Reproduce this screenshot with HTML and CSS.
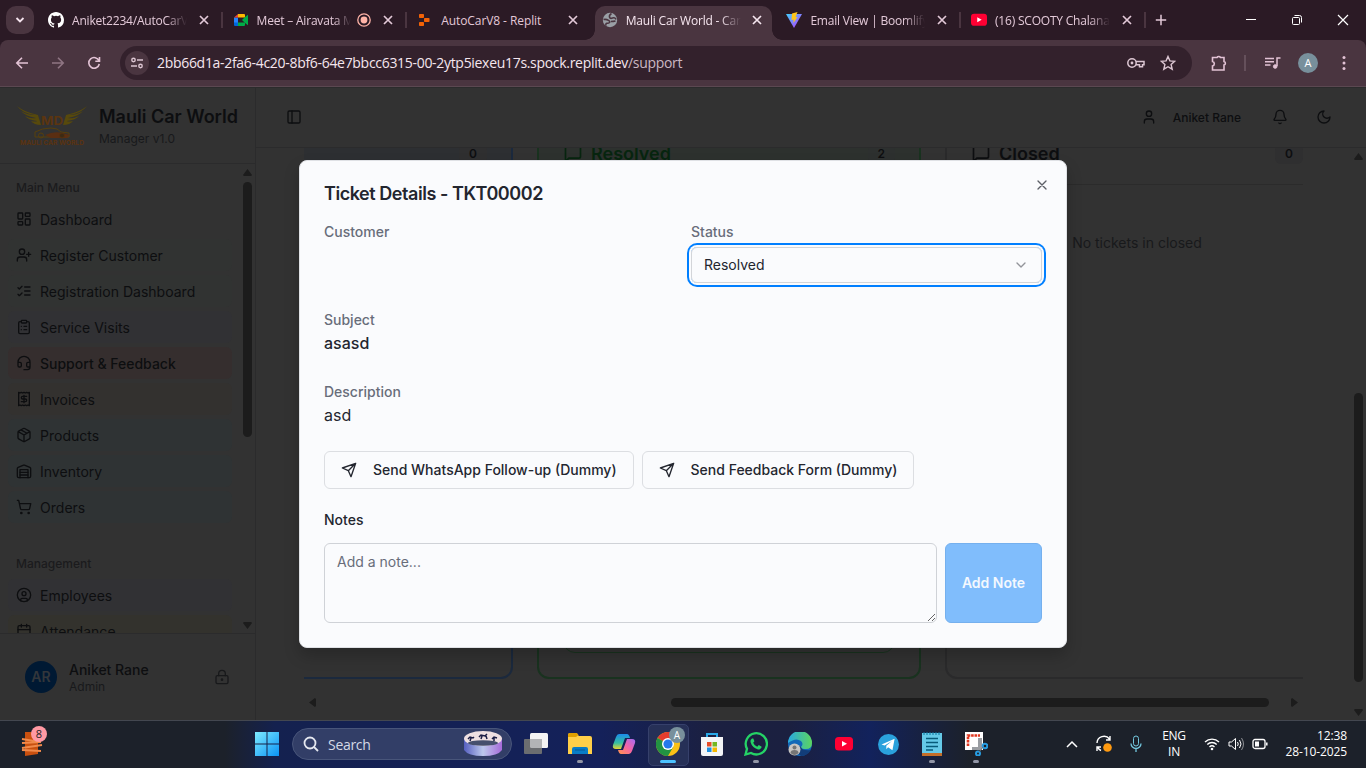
FILE: index.html
```html
<!DOCTYPE html>
<html lang="en">
<head>
<meta charset="utf-8">
<title>Mauli Car World - Car Service</title>
<link rel="stylesheet" href="styles.css">
</head>
<body>
<svg class="defs" aria-hidden="true">
  <symbol id="x" viewBox="0 0 12 12"><path d="M2 2l8 8M10 2l-8 8" fill="none" stroke="currentColor" stroke-width="1.700"/></symbol>
  <symbol id="user" viewBox="0 0 24 24"><path d="M19 21v-2a4 4 0 0 0-4-4H9a4 4 0 0 0-4 4v2"/><circle cx="12" cy="7" r="4"/></symbol>
  <symbol id="send" viewBox="0 0 24 24"><path d="m22 2-7 20-4-9-9-4ZM22 2 11 13"/></symbol>
  <symbol id="msg" viewBox="0 0 24 24"><path d="M21 15a2 2 0 0 1-2 2H7l-4 4V5a2 2 0 0 1 2-2h14a2 2 0 0 1 2 2z"/></symbol>
  <symbol id="yt" viewBox="0 0 20 16"><rect x="1" y="1" width="18" height="13.500" rx="3.500" fill="#ff0033"/><path d="M8 5v5.500l5-2.750z" fill="#fff"/></symbol>
</svg>

<header class="tabs">
  <div class="tab-search"><svg width="12" height="12" viewBox="0 0 12 12" class="ln"><path d="M2.500 4l3.500 3.500L9.500 4" stroke-width="1.800"/></svg></div>
  <div class="tab">
    <svg class="fav" viewBox="0 0 16 16"><path fill="#fff" d="M8 0C3.580 0 0 3.580 0 8c0 3.540 2.290 6.530 5.470 7.590.4.070.55-.17.55-.38v-1.490c-2.010.37-2.530-.49-2.690-.94-.09-.23-.48-.94-.82-1.130-.28-.15-.68-.52-.01-.53.63-.01 1.080.58 1.230.82.72 1.210 1.870.87 2.330.66.07-.52.28-.87.51-1.070-1.780-.2-3.640-.89-3.640-3.950 0-.87.31-1.590.82-2.150-.08-.2-.36-1.020.08-2.120 0 0 .67-.21 2.200.82a7.400 7.400 0 0 1 4 0c1.530-1.040 2.200-.82 2.200-.82.44 1.100.16 1.920.08 2.120.51.56.82 1.270.82 2.150 0 3.070-1.870 3.750-3.650 3.950.29.25.54.73.54 1.480v2.200c0 .21.15.46.55.38A8 8 0 0 0 16 8c0-4.420-3.580-8-8-8z"/></svg>
    <span class="tab-title t1">Aniket2234/AutoCarV</span><svg class="close"><use href="#x"/></svg>
  </div>
  <div class="tab">
    <svg class="fav" viewBox="0 0 16 16"><path d="M1 5.500h4V11H1z" fill="#2684fc"/><path d="M5 2v3.500H1z" fill="#ea4335"/><path d="M5 2h6a1 1 0 0 1 1 1v2.500H5z" fill="#ffba00"/><path d="M5 10.500h7V13a1 1 0 0 1-1 1H5z" fill="#00ac47"/><path d="M1 10.500h4V14H2a1 1 0 0 1-1-1z" fill="#0066da"/><path d="M9 8l3-3 3-2.200v10.400L12 11z" fill="#00ac47"/></svg>
    <span class="tab-title t2">Meet – Airavata M</span>
    <svg class="rec" viewBox="0 0 14 14"><circle cx="7" cy="7" r="6.200" fill="none" stroke="#ffb4a8" stroke-width="1.300"/><circle cx="7" cy="7" r="3.400" fill="#ffb4a8"/></svg>
    <svg class="close"><use href="#x"/></svg>
  </div>
  <div class="tab nosep">
    <svg class="fav" viewBox="0 0 16 16" fill="#f26207"><rect x="2" y="2" width="5" height="4" rx=".8"/><rect x="7" y="6" width="5.500" height="4" rx=".8"/><rect x="2" y="10" width="5" height="4" rx=".8"/></svg>
    <span class="tab-title whole">AutoCarV8 - Replit</span><svg class="close"><use href="#x"/></svg>
  </div>
  <div class="tab active nosep">
    <svg class="fav" viewBox="0 0 16 16"><circle cx="8" cy="8" r="7.200" fill="#9aa0a6"/><path d="M1.500 7.500q3-.5 5 .8t1 2.200-2.500.7-1 2.500M9.500 1.500Q7 3 7.500 5t3 1 3.500 1.500M9 9.500q2.500 0 4.500-.5" stroke="#4a3540" stroke-width="1.600" fill="none"/></svg>
    <span class="tab-title">Mauli Car World - Car</span><svg class="close"><use href="#x"/></svg>
  </div>
  <div class="tab">
    <svg class="fav" viewBox="0 0 16 16"><defs><linearGradient id="v" x1="0" y1="0" x2="1" y2="1"><stop stop-color="#41d1ff"/><stop offset="1" stop-color="#bd34fe"/></linearGradient></defs><path d="M0 2l8 14L16 2z" fill="url(#v)"/><path d="M11.500 0L6 1.500 5.500 8l2-.5L7.500 11l4-6-2 .3z" fill="#ffc61b"/></svg>
    <span class="tab-title">Email View | Boomlify</span><svg class="close"><use href="#x"/></svg>
  </div>
  <div class="tab">
    <svg class="fav" viewBox="1 0 18 16"><use href="#yt" width="20" height="16"/></svg>
    <span class="tab-title">(16) SCOOTY Chalana</span><svg class="close"><use href="#x"/></svg>
  </div>
  <svg class="plus ln" viewBox="0 0 12 12"><path d="M6 .8v10.400M.8 6h10.400" stroke-width="1.500"/></svg>
  <div class="win">
    <svg class="ln" width="12" height="12" viewBox="0 0 12 12"><path d="M1 5.500h10"/></svg>
    <svg class="ln" width="12" height="12" viewBox="0 0 12 12"><rect x="1.500" y="3.500" width="7" height="7" rx="1"/><path d="M3.500 1.500h5a2 2 0 0 1 2 2v5"/></svg>
    <svg class="ln" width="12" height="12" viewBox="0 0 12 12"><path d="M1 1l10 10M11 1L1 11" stroke-width="1.200"/></svg>
  </div>
</header>

<div class="toolbar">
  <div class="navs">
    <svg class="ln" width="14" height="14" viewBox="0 0 14 14"><path d="M13 7H2M7 1.800L1.800 7 7 12.200" stroke-width="1.600"/></svg>
    <svg class="ln dim" width="14" height="14" viewBox="0 0 14 14"><path d="M1 7h11M7 1.800L12.200 7 7 12.200" stroke-width="1.600"/></svg>
    <svg class="ln" width="14" height="14" viewBox="0 0 14 14"><path d="M12 4.800A5.300 5.300 0 1 0 12.300 8M12.500 1v4.200H8.300" stroke-width="1.600"/></svg>
  </div>
  <div class="omnibox">
    <span class="site"><svg class="ln" width="14" height="14" viewBox="0 0 14 14"><circle cx="3.500" cy="4" r="1.700"/><path d="M7 4h6M1 10h6" /><circle cx="10.500" cy="10" r="1.700"/></svg></span>
    <span class="url">2bb66d1a-2fa6-4c20-8bf6-64e7bbcc6315-00-2ytp5iexeu17s.spock.replit.dev<i>/support</i></span>
    <svg class="ln key" width="18" height="12" viewBox="0 0 18 12"><circle cx="5" cy="6" r="4.200" stroke-width="1.500"/><circle cx="5" cy="6" r="1.400" fill="currentColor" stroke="none"/><path d="M9 4.500h8v3.200h-1.500v2h-3v-2H9" stroke-width="1.500"/></svg>
    <svg class="ln" width="16" height="16" viewBox="0 0 16 16"><path d="M8 1.500l1.900 4.400 4.800.4-3.600 3.200 1.100 4.700L8 11.700l-4.200 2.500 1.100-4.700L1.300 6.300l4.800-.4z" stroke-width="1.400"/></svg>
  </div>
  <svg class="ln puzzle" width="18" height="18" viewBox="0 0 18 18"><path d="M2.500 3.500H7a2 2 0 0 1 3.500 0H14v4a1.800 1.800 0 0 1 0 3.500v5H2.500v-4a2.300 2.300 0 0 0 0-4.500z" stroke-width="1.600"/></svg>
  <span class="vsep"></span>
  <svg class="ln music" width="16" height="14" viewBox="0 0 16 14"><path d="M0 2.500h9M0 5.800h9M0 9h5.500M12 10V2h3.500" stroke-width="1.500"/><circle cx="10.200" cy="10.500" r="1.800" fill="currentColor"/></svg>
  <span class="avatar">A</span>
  <svg class="dots" width="4" height="16" viewBox="0 0 4 16" fill="currentColor"><circle cx="2" cy="2.500" r="1.500"/><circle cx="2" cy="8" r="1.500"/><circle cx="2" cy="13.500" r="1.500"/></svg>
</div>

<div class="app">
  <aside class="sidebar">
    <div class="brand">
      <svg class="logo" viewBox="0 0 70 42">
        <g fill="#57490c"><path d="M0 1q7 6 21 9l3 10Q17 20 14 16q5 1 6 0-9-1-12-5 6 3 11 2Q8 11 4 6q6 4 14 4Q5 8 0 1z"/><path d="M70 1q-7 6-21 9l-3 10q7 0 10-4-5 1-6 0 9-1 12-5-6 3-11 2 11-2 15-7-6 4-14 4Q65 8 70 1z"/></g>
        <text x="24" y="20" font-size="12" textLength="22" lengthAdjust="spacingAndGlyphs" fill="#5b3510">MD</text>
        <path d="M18 27q7-4 16-4 7 0 10 4l8 1v4H18z" fill="none" stroke="#57400c"/><path d="M28 30q9-4 17-2l8 2-3 3H34z" fill="#5a2e12"/><circle cx="24" cy="30.500" r="2.500" fill="none" stroke="#57400c"/><circle cx="45" cy="30.500" r="2.500" fill="#3c2a14" stroke="#57300c"/>
        <text x="3" y="40" font-size="6.800" textLength="64" lengthAdjust="spacingAndGlyphs" fill="#5a3210">MAULI CAR WORLD</text>
      </svg>
      <div><h1>Mauli Car World</h1><p>Manager v1.0</p></div>
    </div>
    <div class="menu-wrap">
      <nav class="menu lucide">
        <h2>Main Menu</h2>
        <a class="m-plain"><svg viewBox="0 0 24 24"><rect x="3" y="3" width="7" height="9" rx="1"/><rect x="14" y="3" width="7" height="5" rx="1"/><rect x="14" y="12" width="7" height="9" rx="1"/><rect x="3" y="16" width="7" height="5" rx="1"/></svg>Dashboard</a>
        <a class="m-green"><svg viewBox="0 0 24 24"><path d="M16 21v-2a4 4 0 0 0-4-4H6a4 4 0 0 0-4 4v2M19 8v6M22 11h-6"/><circle cx="9" cy="7" r="4"/></svg>Register Customer</a>
        <a class="m-green"><svg viewBox="0 0 24 24"><path d="m3 17 2 2 4-4M3 7l2 2 4-4M13 6h8M13 12h8M13 18h8"/></svg>Registration Dashboard</a>
        <a class="m-purple"><svg viewBox="0 0 24 24"><rect x="8" y="2" width="8" height="4" rx="1"/><path d="M16 4h2a2 2 0 0 1 2 2v14a2 2 0 0 1-2 2H6a2 2 0 0 1-2-2V6a2 2 0 0 1 2-2h2M12 11h4M12 16h4M8 11h.01M8 16h.01"/></svg>Service Visits</a>
        <a class="m-red"><svg viewBox="0 0 24 24"><path d="M3 11h3a2 2 0 0 1 2 2v3a2 2 0 0 1-2 2H5a2 2 0 0 1-2-2v-5a9 9 0 0 1 18 0v5a2 2 0 0 1-2 2h-1a2 2 0 0 1-2-2v-3a2 2 0 0 1 2-2h3M21 16v2a4 4 0 0 1-4 4h-5"/></svg>Support &amp; Feedback</a>
        <a class="m-orange"><svg viewBox="0 0 24 24"><path d="M4 2v20l2-1 2 1 2-1 2 1 2-1 2 1 2-1 2 1V2l-2 1-2-1-2 1-2-1-2 1-2-1-2 1ZM16 8h-6a2 2 0 1 0 0 4h4a2 2 0 1 1 0 4H8M12 17.500v-11"/></svg>Invoices</a>
        <a class="m-cyan"><svg viewBox="0 0 24 24"><path d="M11 21.730a2 2 0 0 0 2 0l7-4A2 2 0 0 0 21 16V8a2 2 0 0 0-1-1.730l-7-4a2 2 0 0 0-2 0l-7 4A2 2 0 0 0 3 8v8a2 2 0 0 0 1 1.730zM12 22V12M3.300 7 12 12l8.700-5M7.500 4.270l9 5.150"/></svg>Products</a>
        <a class="m-cyan"><svg viewBox="0 0 24 24"><path d="M22 8.350V20a2 2 0 0 1-2 2H4a2 2 0 0 1-2-2V8.350A2 2 0 0 1 3.260 6.500l8-3.200a2 2 0 0 1 1.480 0l8 3.200A2 2 0 0 1 22 8.350ZM6 18h12M6 14h12"/><path d="M6 22V10h12v12"/></svg>Inventory</a>
        <a class="m-cyan"><svg viewBox="0 0 24 24"><circle cx="8" cy="21" r="1"/><circle cx="19" cy="21" r="1"/><path d="M2.050 2.050h2l2.660 12.420a2 2 0 0 0 2 1.580h9.780a2 2 0 0 0 1.950-1.570l1.650-7.430H5.120"/></svg>Orders</a>
        <h2 class="second">Management</h2>
        <a class="m-purple"><svg viewBox="0 0 24 24"><circle cx="12" cy="12" r="10"/><circle cx="12" cy="10" r="3"/><path d="M7 20.660V19a2 2 0 0 1 2-2h6a2 2 0 0 1 2 2v1.660"/></svg>Employees</a>
        <a class="m-yellow"><svg viewBox="0 0 24 24"><path d="M8 2v4M16 2v4M3 10h18"/><rect x="3" y="4" width="18" height="18" rx="2"/></svg>Attendance</a>
      </nav>
      <div class="vbar side"><i class="up"></i><b></b><i class="down"></i></div>
    </div>
    <div class="me">
      <span class="ar">AR</span>
      <div><strong>Aniket Rane</strong><p>Admin</p></div>
      <svg class="lock" viewBox="0 0 24 24"><rect x="3" y="10" width="18" height="12" rx="2"/><path d="M7 10V7a5 5 0 0 1 10 0v3"/><circle cx="12" cy="16" r="1"/></svg>
    </div>
  </aside>
  <section class="content">
    <div class="topbar lucide">
      <svg viewBox="0 0 24 24"><rect x="3" y="3" width="18" height="18" rx="2"/><path d="M9 3v18"/></svg>
      <svg class="push" viewBox="0 0 24 24"><use href="#user"/></svg>
      <span>Aniket Rane</span>
      <svg class="bell" viewBox="0 0 24 24"><path d="M10.270 21a2 2 0 0 0 3.460 0M3.260 15.330A1 1 0 0 0 4 17h16a1 1 0 0 0 .74-1.670C19.410 13.960 18 12.500 18 8A6 6 0 0 0 6 8c0 4.500-1.410 5.960-2.740 7.330"/></svg>
      <svg class="moon" viewBox="0 0 24 24"><path d="M12 3a6 6 0 0 0 9 9 9 9 0 1 1-9-9Z"/></svg>
    </div>
    <div class="main">
      <div class="scroller">
        <div class="board">
          <div class="col blue"><div class="col-head"><em>0</em></div></div>
          <div class="col green"><div class="col-head lucide"><svg viewBox="0 0 24 24"><use href="#msg"/></svg><h3>Resolved</h3><em>2</em></div><div class="ticket"></div></div>
          <div class="col gray"><div class="col-head lucide"><svg viewBox="0 0 24 24"><use href="#msg"/></svg><h3>Closed</h3><em>0</em></div><p>No tickets in closed</p></div>
        </div>
        <div class="hbar"><i class="left"></i><b></b><i class="right"></i></div>
      </div>
      <div class="vbar page"><i class="up"></i><b></b><i class="down"></i></div>
    </div>
  </section>

  <div class="dialog" role="dialog">
    <svg class="dlg-close" viewBox="0 0 24 24"><path d="M18 6 6 18M6 6l12 12"/></svg>
    <h2>Ticket Details - TKT00002</h2>
    <div class="two">
      <div><label>Customer</label></div>
      <div><label>Status</label><div class="select">Resolved<svg viewBox="0 0 24 24"><path d="m6 9 6 6 6-6"/></svg></div></div>
    </div>
    <div class="field subject"><label>Subject</label><p class="med">asasd</p></div>
    <div class="field"><label>Description</label><p>asd</p></div>
    <div class="actions lucide">
      <button><svg viewBox="0 0 24 24"><use href="#send"/></svg>Send WhatsApp Follow-up (Dummy)</button>
      <button><svg viewBox="0 0 24 24"><use href="#send"/></svg>Send Feedback Form (Dummy)</button>
    </div>
    <h4>Notes</h4>
    <div class="note"><textarea placeholder="Add a note..."></textarea><button class="add">Add Note</button></div>
  </div>
</div>

<footer class="taskbar">
  <div class="widget"><svg width="24" height="28" viewBox="0 0 24 28"><path d="M5 2h13v22L5 26z" fill="#c9500f"/><path d="M2 9l18 3M2 13l19-1M2 18l20-3M2 20l19 1" stroke="#f08a4b" stroke-width="1.800"/></svg><span>8</span></div>
  <svg class="start" width="24" height="24" viewBox="0 0 24 24"><defs><linearGradient id="w" x1="0" y1="0" x2="1" y2="1"><stop stop-color="#7eeaff"/><stop offset="1" stop-color="#0a93f5"/></linearGradient></defs><path d="M0 0h11.500v11.500H0zM12.500 0H24v11.500H12.500zM0 12.500h11.500V24H0zM12.500 12.500H24V24H12.500z" fill="url(#w)"/></svg>
  <div class="search">
    <svg class="ln" width="16" height="16" viewBox="0 0 16 16"><circle cx="7" cy="7" r="5.500" stroke-width="1.800"/><path d="M11 11l4 4" stroke-width="1.800"/></svg>Search
    <svg class="promo" width="38" height="26" viewBox="0 0 38 26"><defs><linearGradient id="z"><stop stop-color="#565fc0"/><stop offset=".5" stop-color="#bcc8ec"/><stop offset="1" stop-color="#a66bd8"/></linearGradient></defs><path d="M0 7v12q4 6 19 6t19-6V7z" fill="url(#z)"/><ellipse cx="19" cy="7.500" rx="19" ry="7.500" fill="#eee0e2"/><ellipse cx="19" cy="12" rx="15" ry="2.800" fill="#46506d"/><path d="M4 8l2-2 3 1 1-1M15 6l2-2 4 1 2-2M28 8l2-2 3 1M7 7l-1 3M18 5l-1 3M22 5l1 3M30 7v3" stroke="#1a1d45" stroke-width="1.500" fill="none"/></svg>
  </div>
  <div class="apps">
    <span><svg viewBox="0 0 24 24"><rect x="6" y="1" width="18" height="15" rx="1.500" fill="#f4f4f4"/><rect x="0" y="7" width="18" height="15" rx="1" fill="#6b6d70"/><path d="M6 7h12v9H7.500A1.500 1.500 0 0 1 6 14.500z" fill="#b3b4b6"/></svg></span>
    <span class="run"><svg viewBox="0 0 24 24"><path d="M0 3a2 2 0 0 1 2-2h6l3 3h11a2 2 0 0 1 2 2v16H0z" fill="#ffcf48"/><path d="M0 5h8l2.500-2L9 1H2a2 2 0 0 0-2 2z" fill="#e0a000"/><path d="M4 22v-5a2 2 0 0 1 2-2h12a2 2 0 0 1 2 2v5z" fill="#087cc7"/><path d="M7 18h10" stroke="#055997"/></svg></span>
    <span><svg viewBox="0 0 24 24"><defs><linearGradient id="c1" x1="0" y1="0" x2="0" y2="1"><stop stop-color="#1b8bea"/><stop offset=".6" stop-color="#35bfa0"/><stop offset="1" stop-color="#e8d531"/></linearGradient><linearGradient id="c2" x1="1" y1="0" x2="0" y2="1"><stop stop-color="#a46cf5"/><stop offset=".5" stop-color="#f463a4"/><stop offset="1" stop-color="#ff9648"/></linearGradient></defs><path d="M7 2h8q2 0 3 4h-5l-4 11H4q-4 0-3-4l3-8q1-3 3-3z" fill="url(#c1)"/><path d="M17 22H9q-2 0-3-4h5l4-11h5q4 0 3 4l-3 8q-1 3-3 3z" fill="url(#c2)"/></svg></span>
    <span class="current run"><svg viewBox="0 0 24 24"><circle cx="12" cy="12" r="12" fill="#fbc116"/><path d="M12 12 1.600 6A12 12 0 0 1 22.400 6z" fill="#e33b2e"/><path d="M12 12 1.600 6A12 12 0 0 0 12 24l5.200-9z" fill="#229342"/><circle cx="12" cy="12" r="6" fill="#fff"/><circle cx="12" cy="12" r="4.600" fill="#2478eb"/></svg><b>A</b></span>
    <span><svg viewBox="0 0 24 24"><path d="M7 6V2h10v4" fill="none" stroke="#29a9e8" stroke-width="2"/><path d="M1 5h22v17a2 2 0 0 1-2 2H3a2 2 0 0 1-2-2z" fill="#f3f4f6"/><path d="M7 10h4.500v4.500H7z" fill="#e64b27"/><path d="M12.500 10H17v4.500h-4.500z" fill="#73b722"/><path d="M7 15.500h4.500V20H7z" fill="#1c8fe0"/><path d="M12.500 15.500H17V20h-4.500z" fill="#f5b800"/></svg></span>
    <span class="run"><svg viewBox="0 0 24 24"><path d="M1.500 22.500l1.500-5.600A10.600 10.600 0 1 1 7 21z" fill="none" stroke="#25d366" stroke-width="2.300"/><path d="M8 6.500q-2 1-1.500 3.500Q8 15.500 14 17.500q3 0 3.700-2.800L14.800 13l-1.600 1.700q-3-1.200-4-4l1.200-1.400L9.300 6.500z" fill="#25d366"/></svg></span>
    <span><svg viewBox="0 0 24 24"><defs><linearGradient id="e"><stop stop-color="#28a9e2"/><stop offset="1" stop-color="#5bd45f"/></linearGradient></defs><circle cx="12" cy="12" r="12" fill="#1268b8"/><path d="M0 11A12 12 0 0 1 24 11q0 6-6 6-5 0-5-2 3-3 0-6-5-4-13 2z" fill="url(#e)"/><path d="M13 15q1 4 10 3-4 6-10 6-6-4-4-11z" fill="#123d79"/><circle cx="6.500" cy="17.500" r="6" fill="#c7c5c3"/><circle cx="6.500" cy="15.500" r="2" fill="#757575"/><path d="M2.500 21q0-3 4-3t4 3q-4 4-8 0" fill="#757575"/></svg></span>
    <span><svg class="ytb" viewBox="0 0 20 16"><use href="#yt"/></svg></span>
    <span><svg class="tg" viewBox="0 0 24 24"><circle cx="12" cy="12" r="12" fill="#2aa1dc"/><path d="M4 12l15-6.500-2.500 13-5-3.500-2 2.500v-4L16 8l-8.500 5z" fill="#fff"/></svg></span>
    <span class="run"><svg viewBox="0 0 24 24"><rect x="2" y="1" width="20" height="21" fill="#65c9e8"/><path d="M4 0v3M7 0v3M10 0v3M13 0v3M16 0v3M19 0v3" stroke="#0d759e"/><path d="M6 6.500h12M6 10.500h12M6 14.500h12M6 18h7" stroke="#075b7b" stroke-width="1.500"/><path d="M2 21h20v3H2z" fill="#c46e28"/></svg></span>
    <span class="run"><svg viewBox="0 0 24 24"><path d="M1 0h18v18H1z" fill="#fff"/><path d="M4 14V3.500h12" fill="none" stroke="#df3720" stroke-width="2.600" stroke-dasharray="2.600 .8"/><path d="M8 15h6V6h4v12H8z" fill="#9a9da2"/><circle cx="21" cy="14" r="2.300" fill="none" stroke="#279ce1" stroke-width="2"/><circle cx="14" cy="21.500" r="2" fill="none" stroke="#279ce1" stroke-width="2"/><path d="M19 15l-4 5" stroke="#777"/></svg></span>
  </div>
  <div class="tray">
    <svg class="ln chev" width="12" height="8" viewBox="0 0 12 8"><path d="M1 7l5-5 5 5" stroke-width="1.500"/></svg>
    <svg class="ln upd" width="18" height="18" viewBox="0 0 18 18"><path d="M2 8A7 7 0 0 1 14.500 4M15 1v4h-4M6 15.500A7 7 0 0 1 2.500 12M2 16v-4h4" stroke-width="1.400"/><circle cx="12.500" cy="12.500" r="4.300" fill="#ff9a10" stroke="none"/></svg>
    <svg class="ln mic" width="12" height="18" viewBox="0 0 12 18"><rect x="3.500" y="1" width="5" height="10" rx="2.500"/><path d="M1 8.500a5 5 0 0 0 10 0M6 13.500V17" stroke-width="1.300"/></svg>
    <div class="lang">ENG<br>IN</div>
    <svg class="ln wifi" width="16" height="14" viewBox="0 0 16 14"><path d="M1 5a10 10 0 0 1 14 0M3.300 7.500a6.700 6.700 0 0 1 9.400 0M5.500 9.900a3.600 3.600 0 0 1 5 0" stroke-width="1.400"/><circle cx="8" cy="12" r="1.300" fill="currentColor" stroke="none"/></svg>
    <svg class="ln vol" width="16" height="14" viewBox="0 0 16 14"><path d="M1 5v4h2.500L7.500 12.500v-11L3.500 5zM9.500 5q1.500 2 0 4M11.500 3q3 4 0 8"/><path d="M13.500 1q4 6 0 12" opacity=".5"/></svg>
    <svg class="ln" width="16" height="12" viewBox="0 0 16 12"><rect x="1" y="1.500" width="12" height="9" rx="2" stroke-width="1.300"/><path d="M14.800 4.500v3" stroke-width="1.500"/><rect x="3" y="3.500" width="4" height="5" fill="currentColor" stroke="none"/></svg>
    <div class="clock">12:38<br>28-10-2025</div>
  </div>
</footer>
</body>
</html>
```
FILE: styles.css
```css
* { box-sizing: border-box; }
body { margin: 0; width: 1366px; height: 768px; overflow: hidden; background: #2b1a25; font-family: Inter, sans-serif; display: flex; flex-direction: column; }
h1, h2, h3, h4, p { margin: 0; }
svg { flex: none; display: block; }
.defs { position: absolute; width: 0; height: 0; }
.ln { fill: none; stroke: currentColor; }

/* Browser chrome */
.tabs { height: 40px; flex: none; display: flex; align-items: center; color: #e3c9d8; font: 12px "Open Sans", sans-serif; background: #2b1a25; }
.tab-search { width: 28px; height: 28px; margin: 0 6px; border-radius: 10px; background: #4a3540; display: flex; align-items: center; justify-content: center; color: #f5e4ee; }
.tab { width: 184.600px; flex: none; height: 34px; margin-top: 6px; padding: 0 15px 6px 8px; display: flex; align-items: center; position: relative; }
.tab::after { content: ""; position: absolute; right: 2px; top: 6px; width: 2px; height: 16px; background: #4a3540; }
.tab.nosep::after { display: none; }
.tab.active { color: #f6e6ef; }
.tab.active::before { content: ""; position: absolute; left: 1px; right: 6px; top: 0; bottom: 0; background: #4a3540; border-radius: 10px 10px 0 0; }
.tab.active.nosep::after { content: ""; display: block; left: -9px; right: -4px; width: auto; height: 10px; top: auto; bottom: 0; background: radial-gradient(circle at 0 0, transparent 9.500px, #4a3540 10px) left / 10px 10px no-repeat, radial-gradient(circle at 100% 0, transparent 9.500px, #4a3540 10px) right / 10px 10px no-repeat; }
.tab.active > * { position: relative; }
.fav { width: 16px; height: 16px; }
.tab-title { width: 115px; margin-left: 8px; overflow: hidden; white-space: nowrap; letter-spacing: -.2px; -webkit-mask-image: linear-gradient(90deg, #000 82%, transparent); mask-image: linear-gradient(90deg, #000 82%, transparent); }
.whole { letter-spacing: -.08px; -webkit-mask-image: none; mask-image: none; }
.t2 { width: 94px; }
.rec { width: 14px; height: 14px; margin-left: 6px; }
.close { width: 12px; height: 12px; margin-left: auto; }
.plus { width: 12px; height: 12px; margin-left: 7px; }
.win { margin-left: auto; display: flex; gap: 34px; margin-right: 17px; color: #fff; }

.toolbar { height: 47px; flex: none; background: #4a3540; border-bottom: 1px solid #5b4851; border-radius: 8px 8px 0 0; display: flex; align-items: center; color: #e3c3d5; }
.navs { display: flex; gap: 22px; margin-left: 15px; width: 105px; }
.dim { opacity: .45; }
.omnibox { width: 1072px; height: 34px; border-radius: 17px; background: #33212c; display: flex; align-items: center; padding: 0 16px 0 5px; color: #dcc6d2; }
.site { width: 24px; height: 24px; border-radius: 50%; background: #4a3540; display: flex; align-items: center; justify-content: center; }
.site .ln { stroke-width: 1.400; }
.url { margin-left: 8px; flex: 1; font: 14px "Open Sans", sans-serif; letter-spacing: -.305px; color: #f5e6ee; white-space: nowrap; padding-bottom: 2px; }
.url i { font-style: normal; color: #cbb8c3; }
.key { margin-right: 15px; }
.puzzle { margin-left: 18px; }
.vsep { width: 2px; height: 16px; margin: 0 19px 0 16px; background: #65505b; }
.avatar { width: 20px; height: 20px; border-radius: 50%; margin: 0 24px 0 17px; background: #78909c; color: #fff; font: 11px/20px "Open Sans", sans-serif; text-align: center; }

/* Application behind the dialog */
.app { height: 633px; flex: none; background: #323232; display: flex; position: relative; border-top: 1px solid #2b2b2c; color: #0d0e10; }
.lucide svg, .lock, .dlg-close, .select svg { width: 16px; height: 16px; fill: none; stroke: currentColor; stroke-width: 2; stroke-linecap: round; stroke-linejoin: round; }
.sidebar { width: 256px; border-right: 1px solid #2b2b2c; display: flex; flex-direction: column; }
.brand { height: 76px; border-bottom: 1px solid #2b2b2c; padding: 0 16px 0 17px; display: flex; align-items: center; gap: 12px; }
.logo { width: 70px; height: 42px; font-family: Inter, sans-serif; font-weight: 700; }
.brand h1 { font-size: 18px; line-height: 24px; font-weight: 600; white-space: nowrap; }
.brand p { font-size: 12px; line-height: 16px; margin-top: 2px; color: #18191b; }
.menu-wrap { height: 469px; display: flex; overflow: hidden; }
.menu { width: 240px; padding: 8px 8px 0; display: flex; flex-direction: column; gap: 4px; }
.menu h2 { height: 32px; flex: none; padding: 0 8px; font-size: 12px; line-height: 32px; font-weight: 500; color: #1b1b1d; margin-bottom: -5px; }
.menu h2.second { margin-top: 21px; }
.menu a { height: 32px; flex: none; border-radius: 6px; padding: 0 8px; display: flex; align-items: center; gap: 8px; font-size: 14px; letter-spacing: .02px; }
.m-green { background: #313332; }
.m-purple { background: #313134; }
.menu .m-red { background: #352e2e; font-weight: 500; letter-spacing: 0; }
.m-orange { background: #33312f; }
.m-cyan { background: #2f3334; }
.m-yellow { background: #33322d; }
.vbar { display: flex; flex-direction: column; align-items: center; width: 15px; }
.vbar b, .hbar b { background: #1c1c1c; border-radius: 5px; }
.vbar b { width: 9px; }
.vbar i, .hbar i { background: #1c1c1c; width: 9px; height: 7px; flex: none; }
.up { clip-path: polygon(50% 0, 100% 85%, 90% 100%, 10% 100%, 0 85%); }
.down { clip-path: polygon(50% 100%, 100% 15%, 90% 0, 10% 0, 0 15%); }
.side .up { margin-top: 5px; }
.side b { height: 255px; margin-top: 6px; }
.side .down { margin-top: 185px; }
.me { border-top: 1px solid #2b2b2c; flex: 1; display: flex; align-items: center; padding: 0 25px; }
.ar { width: 32px; height: 32px; border-radius: 50%; background: #001933; color: #32363b; font: 600 14px/32px Inter, sans-serif; text-align: center; margin-right: 12px; }
.me strong { display: block; font-size: 14px; line-height: 19px; font-weight: 500; }
.me p { font-size: 12px; line-height: 16px; color: #18191b; }
.lock { margin-left: auto; color: #18191b; }
.content { flex: 1; min-width: 0; display: flex; flex-direction: column; }
.topbar { height: 60px; border-bottom: 1px solid #2b2b2c; padding: 0 34px 1px 30px; display: flex; align-items: center; font-size: 12px; font-weight: 500; }
.push { margin-left: auto; }
.topbar span { margin-left: 16px; }
.bell { margin-left: 31px; }
.moon { margin-left: 28px; }
.main { flex: 1; display: flex; justify-content: space-between; padding-left: 48px; min-height: 0; }
.scroller { width: 999px; overflow: hidden; }
.board { display: flex; gap: 24px; margin: -24px 0 0 -175px; width: 1200px; }
.col { width: 384px; height: 555px; flex: none; border: 2px solid #2a2a2b; border-radius: 12px; }
.col-head { height: 59px; display: flex; align-items: center; padding: 0 24px 2px; gap: 8px; border-bottom: 1px solid #2b2b2b; }
.col-head svg { width: 20px; height: 20px; }
.col-head h3 { font-size: 18px; font-weight: 600; line-height: 28px; }
.col-head em { margin-left: auto; height: 20px; padding: 0 10px; border-radius: 6px; background: #2f2f30; font: 600 12px/20px Inter, sans-serif; }
.blue { border-color: #1b293d; }
.blue .col-head { background: #2d2f32; }
.green { border-color: #19321f; }
.green .col-head { background: #2d312e; border-radius: 10px 10px 0 0; }
.green svg, .green h3 { color: #07250f; }
.green em { color: #0d0e10; background: #2d302f; }
.ticket { height: 452px; margin: 16px 24px; border: 1px solid #19321f; border-radius: 12px; }
.col p { text-align: center; font-size: 14px; margin-top: 49px; color: #18191b; }
.hbar { display: flex; align-items: center; margin-top: 19px; height: 9px; }
.hbar i { width: 7px; height: 9px; }
.hbar b { width: 598px; height: 9px; margin: 0 22px 0 355px; }
.left { margin-left: 5px; clip-path: polygon(0 50%, 85% 0, 100% 10%, 100% 90%, 85% 100%); }
.right { clip-path: polygon(100% 50%, 15% 0, 0 10%, 0 90%, 15% 100%); }
.page .up { margin-top: 5px; }
.page b { height: 289px; margin-top: 233px; }
.page .down { margin-top: 27px; }

/* Ticket dialog */
.dialog { position: absolute; left: 299px; top: 72px; width: 768px; height: 488px; padding: 24px; background: #fafbfd; border: 1px solid #dfe1e5; border-radius: 8px; box-shadow: 0 8px 16px rgba(0,0,0,.2); color: #23262f; display: flex; flex-direction: column; }
.dlg-close { position: absolute; right: 16px; top: 16px; color: #5c5f66; }
.dialog h2 { font-size: 18px; line-height: 18px; font-weight: 600; letter-spacing: -.45px; }
.two { display: grid; grid-template-columns: 351px 351px; gap: 16px; margin-top: 19px; height: 64px; }
.dialog label { display: block; font-size: 14px; line-height: 20px; font-weight: 500; color: #686d7a; }
.select { height: 36px; margin-top: 5px; border: 1px solid #d3d5d9; border-radius: 6px; padding: 0 12px 1px; font-size: 14px; display: flex; align-items: center; justify-content: space-between; box-shadow: 0 0 0 2px #fafbfd, 0 0 0 4px #007fff; }
.select svg { color: #92949a; }
.field { margin-top: 24px; height: 48px; }
.subject { margin-top: 24px; }
.field p { font-size: 16px; line-height: 24px; margin-top: 1px; }
.med { font-weight: 500; }
.actions { display: flex; gap: 8px; margin-top: 21px; }
.actions button { height: 38px; padding: 0 16px 1px; display: flex; align-items: center; border: 1px solid #dcdee2; border-radius: 6px; background: #fafbfd; color: #23262f; font: 500 14px Inter, sans-serif; }
.actions svg { margin-right: 16px; }
.dialog h4 { font-size: 14px; line-height: 20px; font-weight: 500; margin-top: 21px; }
.note { display: flex; gap: 8px; margin-top: 13px; }
.note textarea { width: 613px; height: 80px; padding: 8px 12px; border: 1px solid #cfd2d7; border-radius: 6px; background: #fafbfd; font: 14px/20px Inter, sans-serif; }
.note textarea::placeholder { color: #686d7a; opacity: 1; }
.add { width: 97px; height: 80px; padding: 0 0 2px; border: 1px solid #75b0ee; border-radius: 6px; background: #80bdfc; color: #f3f8fe; font: 600 14px Inter, sans-serif; }

/* Desktop taskbar */
.taskbar { height: 48px; flex: none; border-top: 1px solid #434750; display: flex; align-items: center; color: #fff; font-family: "Open Sans", sans-serif; background: linear-gradient(90deg, #1c212a 0, #1c212a 225px, #14214f 275px, #14215a 600px, #1b2041 710px, #1b2040 790px, #12225c 870px, #172142 920px, #1c212a 970px); padding-bottom: 1px; }
.widget { margin-left: 20px; width: 28px; position: relative; }
.widget span { position: absolute; left: 11px; top: -4px; width: 16px; height: 16px; border-radius: 50%; background: #ff99a4; color: #222; font-size: 11px; line-height: 16px; text-align: center; }
.start { margin-left: 207px; }
.search { margin-left: 13px; width: 220px; height: 32px; border: 1px solid #48557a; border-radius: 16px; background: #323e67; display: flex; align-items: center; padding: 0 9px 0 10px; font-size: 14px; letter-spacing: -.3px; color: #d5d9e6; }
.search .ln { margin-right: 9px; color: #e5e8f0; }
.promo { margin-left: auto; }
.apps { display: flex; margin-left: 2px; }
.apps span { width: 44px; height: 46px; position: relative; display: flex; align-items: center; justify-content: center; }
.apps svg { width: 24px; height: 24px; position: relative; }
.apps .ytb { width: 20px; height: 16px; }
.apps .tg { width: 21px; height: 21px; }
.run::after { content: ""; position: absolute; bottom: 4px; left: 19px; width: 6px; height: 3px; border-radius: 2px; background: #9296a6; }
.current::before { content: ""; position: absolute; left: 2px; top: 3px; width: 39px; height: 40px; border-radius: 5px; border: 1px solid #36406b; background: #263057; }
.current::after { width: 16px; left: 14px; background: #4cc2ff; }
.current b { position: absolute; left: 23px; top: 6px; width: 16px; height: 16px; border-radius: 50%; background: #78909c; font-size: 10px; line-height: 16px; text-align: center; font-weight: 400; }
.tray { margin-left: auto; display: flex; align-items: center; padding-right: 19px; font-size: 12px; line-height: 16px; }
.upd { margin-left: 17px; }
.mic { margin-left: 17px; color: #73c8df; }
.lang { margin-left: 20px; width: 24px; text-align: center; letter-spacing: -.3px; }
.wifi { margin-left: 18px; }
.vol { margin: 0 8px; }
.clock { margin-left: 16px; width: 63px; text-align: right; letter-spacing: -.1px; white-space: nowrap; }
```
